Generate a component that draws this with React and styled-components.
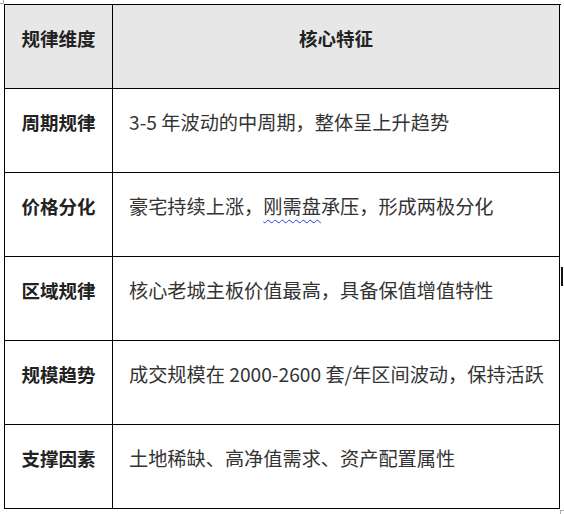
import React from "react";
import styled, { createGlobalStyle } from "styled-components";

const Global = createGlobalStyle`
  html, body { margin: 0; padding: 0; background: #fff; }
  body { font-family: "Noto Sans CJK SC", "Noto Sans", sans-serif; }
`;

const Page = styled.div`
  position: relative;
  width: 564px;
  height: 514px;
  padding: 4px 0 0 4px;
  box-sizing: border-box;
`;

const Corner = styled.div`
  position: absolute;
  width: 3px;
  height: 3px;
  border-color: #aaa;
  border-style: solid;
  border-width: 0;
  ${(p) =>
    p.$end
      ? `left: 560px; top: 510px; border-left-width: 1px; border-top-width: 1px;`
      : `left: 0; top: 0; border-right-width: 1px; border-bottom-width: 1px;`}
`;

const Caret = styled.div`
  position: absolute;
  left: 561px;
  top: 267px;
  width: 1.5px;
  height: 19px;
  background: #111;
`;

const Grid = styled.div`
  display: grid;
  grid-template-columns: 108px 447px;
  grid-auto-rows: 84px;
  width: 556px;
  border-top: 1px solid #000;
  border-left: 1px solid #000;
`;

const Cell = styled.div`
  box-sizing: border-box;
  border-right: 1px solid #000;
  border-bottom: 1px solid #000;
  padding: 20px ${(p) => (p.$center ? "0" : "16px")} 0;
  font-size: ${(p) => (p.$center ? "18.5px" : "19.2px")};
  line-height: 27px;
  text-align: ${(p) => (p.$center ? "center" : "left")};
  background: ${(p) => (p.$head ? "#e7e7e7" : "#fff")};
  font-weight: ${(p) => (p.$bold ? 700 : 400)};
  color: ${(p) => (p.$bold ? "#222" : "#333")};
  white-space: nowrap;
`;

const Squiggle = styled.span`
  text-decoration: underline wavy #2f3bd8;
  text-decoration-thickness: 1.3px;
  text-underline-offset: 5px;
`;

const rows = [
  ["周期规律", "3-5 年波动的中周期，整体呈上升趋势"],
  [
    "价格分化",
    <>
      豪宅持续上涨，<Squiggle>刚需盘</Squiggle>承压，形成两极分化
    </>,
  ],
  ["区域规律", "核心老城主板价值最高，具备保值增值特性"],
  ["规模趋势", "成交规模在 2000-2600 套/年区间波动，保持活跃"],
  ["支撑因素", "土地稀缺、高净值需求、资产配置属性"],
];

export default function App() {
  return (
    <>
      <Global />
      <Page>
        <Corner />
        <Grid>
          <Cell $head $bold $center>规律维度</Cell>
          <Cell $head $bold $center>核心特征</Cell>
          {rows.map(([k, v], i) => (
            <React.Fragment key={i}>
              <Cell $bold $center>{k}</Cell>
              <Cell>{v}</Cell>
            </React.Fragment>
          ))}
        </Grid>
        <Caret />
        <Corner $end />
      </Page>
    </>
  );
}
